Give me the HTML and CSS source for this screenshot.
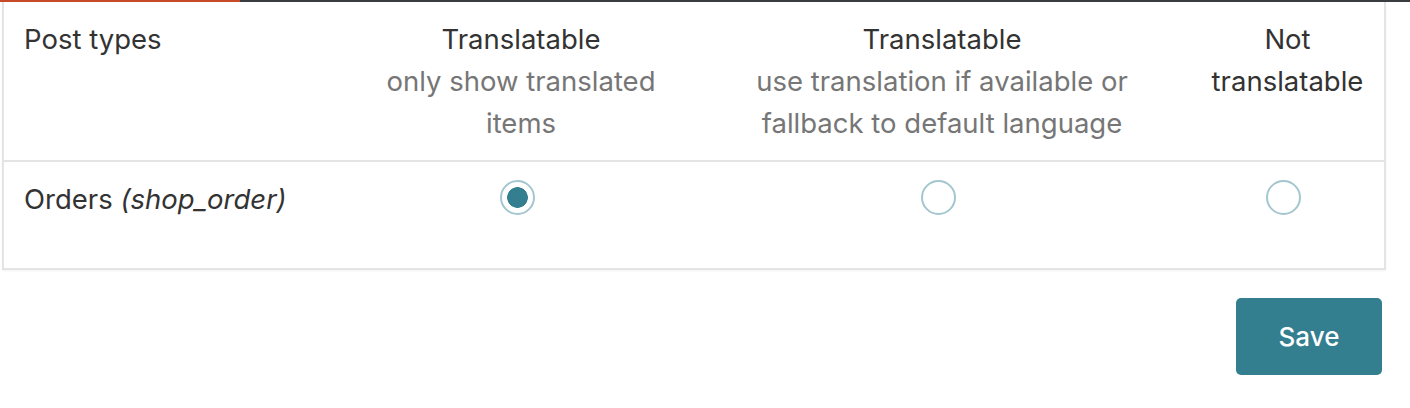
FILE: index.html
```html
<!DOCTYPE html>
<html lang="en">
<head>
<meta charset="utf-8">
<title>Post types</title>
<link rel="stylesheet" href="styles.css">
</head>
<body>
<div class="tabbar"><span class="tabbar-active"></span></div>
<div class="card">
  <div class="row row-head">
    <div class="cell cell-name">Post types</div>
    <div class="cell cell-opt">Translatable<span class="sub">only show translated items</span></div>
    <div class="cell cell-opt cell-wide">Translatable<span class="sub">use translation if available or fallback to default language</span></div>
    <div class="cell cell-opt cell-narrow">Not translatable</div>
  </div>
  <div class="row row-body">
    <div class="cell cell-name">Orders <em>(shop_order)</em></div>
    <div class="cell cell-opt"><input class="radio" type="radio" name="shop_order" checked></div>
    <div class="cell cell-opt"><input class="radio" type="radio" name="shop_order"></div>
    <div class="cell cell-opt"><input class="radio" type="radio" name="shop_order"></div>
  </div>
</div>
<div class="actions">
  <button class="btn-save" type="button">Save</button>
</div>
</body>
</html>
```
FILE: styles.css
```css
html, body {
  margin: 0;
  padding: 0;
  background: #fff;
}
body {
  font-family: Inter, "Noto Sans", sans-serif;
  font-size: 27.5px;
  line-height: 42px;
  color: #333;
}
.tabbar {
  height: 2px;
  background: #3a3d40;
  display: flex;
}
.tabbar-active {
  width: 240px;
  background: #c8482a;
}
.card {
  margin-left: 2px;
  width: 1384px;
  box-sizing: border-box;
  border: 2px solid #e4e4e4;
  border-top: 0;
  box-shadow: 0 1px 2px rgba(0,0,0,0.05);
}
.row {
  display: grid;
  grid-template-columns: 341px 348px 494px 197px;
}
.row-head {
  border-bottom: 2px solid #e4e4e4;
  padding: 16px 0;
}
.row-body {
  padding: 16px 0 0;
  height: 106px;
  box-sizing: border-box;
}
.cell {
  padding: 0 20px;
}
.cell-opt {
  text-align: center;
  padding: 0 12px 0 16px;
}
.cell-wide {
  padding: 0 20px 0 24px;
}
.cell-narrow {
  padding: 0 8px 0 12px;
}
.sub {
  display: block;
  color: #767676;
}
em {
  font-style: italic;
}
.radio {
  appearance: none;
  -webkit-appearance: none;
  width: 35px;
  height: 35px;
  margin: 2px 0 0 -4px;
  border: 2px solid #a3c6cf;
  border-radius: 50%;
  background: #fff;
  vertical-align: top;
  box-sizing: border-box;
}
.radio:checked {
  background: radial-gradient(circle, #337e8f 0, #337e8f 10px, #fff 10.6px);
}
.row-body .cell-opt {
  padding: 0 16px;
}
.actions {
  display: flex;
  justify-content: flex-end;
  width: 1382px;
  padding-top: 28px;
}
.btn-save {
  width: 146px;
  height: 77px;
  border: 0;
  border-radius: 5px;
  background: #337e8f;
  color: #fff;
  font-family: Inter, "Noto Sans", sans-serif;
  font-size: 26px;
  font-weight: 500;
}
```
